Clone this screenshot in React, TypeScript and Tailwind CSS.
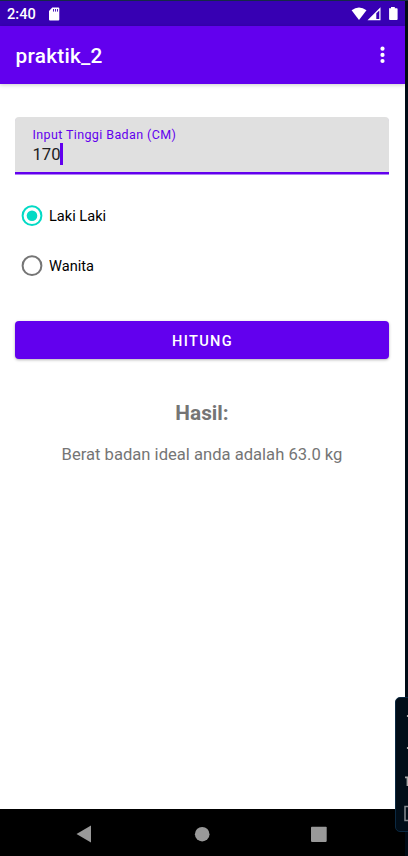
import React from "react";

function StatusBar() {
  return (
    <div className="flex h-[25px] shrink-0 items-center bg-[#3700b3] text-white">
      <span className="ml-[7px] w-[41px] pt-px text-[14.6px] font-medium leading-[24px]">2:40</span>
      <svg className="h-[14px] w-[12px]" viewBox="0 0 12 14">
        <path fill="#fff" d="M4.3.5h6q1 0 1 1v11q0 1-1 1H2q-1 0-1-1V4z" />
        <path stroke="#3700b3" strokeWidth="0.9" d="M5.5 2v2.6M7.5 2v2.6M9.5 2v2.6" />
      </svg>
      <svg className="ml-auto mr-[7px] h-[14px] w-[47px]" viewBox="0 0 47 14">
        <path fill="#fff" d="M.6 3.2Q8-2 15.5 3.2L8 13z" />
        <path fill="#fff" d="M16.5 13.2L29.5 .3V13.2z" />
        <path fill="#3700b3" d="M25.3 6.3l3-2.9V12h-3z" />
        <path fill="#fff" d="M38 1.3h2V0h3.8v1.3h2q.8 0 .8.8v10q0 .9-.8.9H39q-.9 0-.9-.9V2z" />
      </svg>
    </div>
  );
}

function Toolbar() {
  return (
    <header className="z-10 flex h-[58px] shrink-0 items-center justify-between bg-[#6200ee] pl-[15.5px] pr-[20.5px] text-white shadow-[0_1px_4px_rgba(0,0,0,0.2)]">
      <h1 className="pt-[3px] text-[20.8px] font-medium tracking-[0.25px]">praktik_2</h1>
      <svg className="h-[18px] w-[5px]" viewBox="0 0 5 18" fill="#fff">
        <circle cx="2.5" cy="2.7" r="2.1" />
        <circle cx="2.5" cy="8.9" r="2.1" />
        <circle cx="2.5" cy="15" r="2.1" />
      </svg>
    </header>
  );
}

function Radio({ label, checked }: { label: string; checked: boolean }) {
  return (
    <div className="flex h-[50px] items-center">
      <svg className="h-[22px] w-[22px]" viewBox="0 0 22 22">
        <circle cx="11" cy="10.7" r="9.4" fill="none" strokeWidth="2" stroke={checked ? "#03dac5" : "#757575"} />
        {checked && <circle cx="11" cy="10.7" r="5.3" fill="#03dac5" />}
      </svg>
      <span className="ml-[6px] pt-[2px] text-[14.6px] text-black">{label}</span>
    </div>
  );
}

function NavBar() {
  return (
    <nav className="flex h-[47px] shrink-0 items-center bg-black pl-[76px] pt-[3px]">
      <svg className="h-[18px] w-[252px]" viewBox="0 0 252 18" fill="#999">
        <path d="M.5 9L15 .5v17z" />
        <circle cx="126.2" cy="9.2" r="7.3" />
        <rect x="235" y="1.7" width="15.7" height="15.2" rx="0.8" />
      </svg>
    </nav>
  );
}

export default function App() {
  return (
    <div className="relative h-[856px] w-[408px] overflow-hidden bg-[#000b16] pt-px font-[Roboto,sans-serif]">
      <div className="absolute inset-x-0 top-0 h-px bg-[#142947]" />
      <div className="flex h-[855px] w-[405px] flex-col bg-white">
        <StatusBar />
        <Toolbar />
        <main className="flex flex-1 flex-col pl-[15.4px] pr-[16.4px] pt-[33px]">
          <div className="h-[57px] rounded-t-[4px] border-b-2 border-[#6200ee] bg-[#e0e0e0] pl-[17px] pt-[9px] shadow-[0_1px_0_rgba(98,0,238,0.5)]">
            <label className="block text-[12.5px] leading-[18px] tracking-[0.39px] text-[#6200ee]">
              Input Tinggi Badan (CM)
            </label>
            <div className="flex h-[20px] items-center text-[16.7px] tracking-[0.1px] text-[#212121]">
              <span className="pt-[2px]">170</span>
              <span className="-ml-[0.5px] h-[22px] w-[2.5px] bg-[#6200ee]" />
            </div>
          </div>
          <div className="mt-[17px] pl-[5.6px]">
            <Radio label="Laki Laki" checked />
            <Radio label="Wanita" checked={false} />
          </div>
          <button className="mt-[30px] flex h-[38px] shrink-0 items-center justify-center rounded-[4px] bg-[#6200ee] pl-px pt-[3px] text-[14.6px] font-medium tracking-[1.3px] text-white shadow-[0_1px_3px_rgba(0,0,0,0.3)]">
            HITUNG
          </button>
          <h2 className="mt-[40px] text-center text-[20.8px] font-bold leading-[28px] text-[#757575]">Hasil:</h2>
          <p className="mt-[16px] text-center text-[16.6px] leading-[24px] text-[#757575]">
            Berat badan ideal anda adalah 63.0 kg
          </p>
        </main>
        <NavBar />
      </div>
      <aside className="absolute left-[395px] top-[697px] z-20 h-[135px] w-[30px] rounded-[5px] border border-[#0b2942] bg-[#010d18]">
        <svg className="h-[133px] w-[12px]" viewBox="0 0 12 133" fill="none" stroke="#aaa">
          <path d="M10.9 18h2M10.9 50h2" strokeWidth="1.8" />
          <path d="M9 79.3h2.5V88" strokeWidth="1.8" />
          <path d="M14 108.5H9v14h5" stroke="#858b90" strokeWidth="1.5" />
        </svg>
      </aside>
    </div>
  );
}
